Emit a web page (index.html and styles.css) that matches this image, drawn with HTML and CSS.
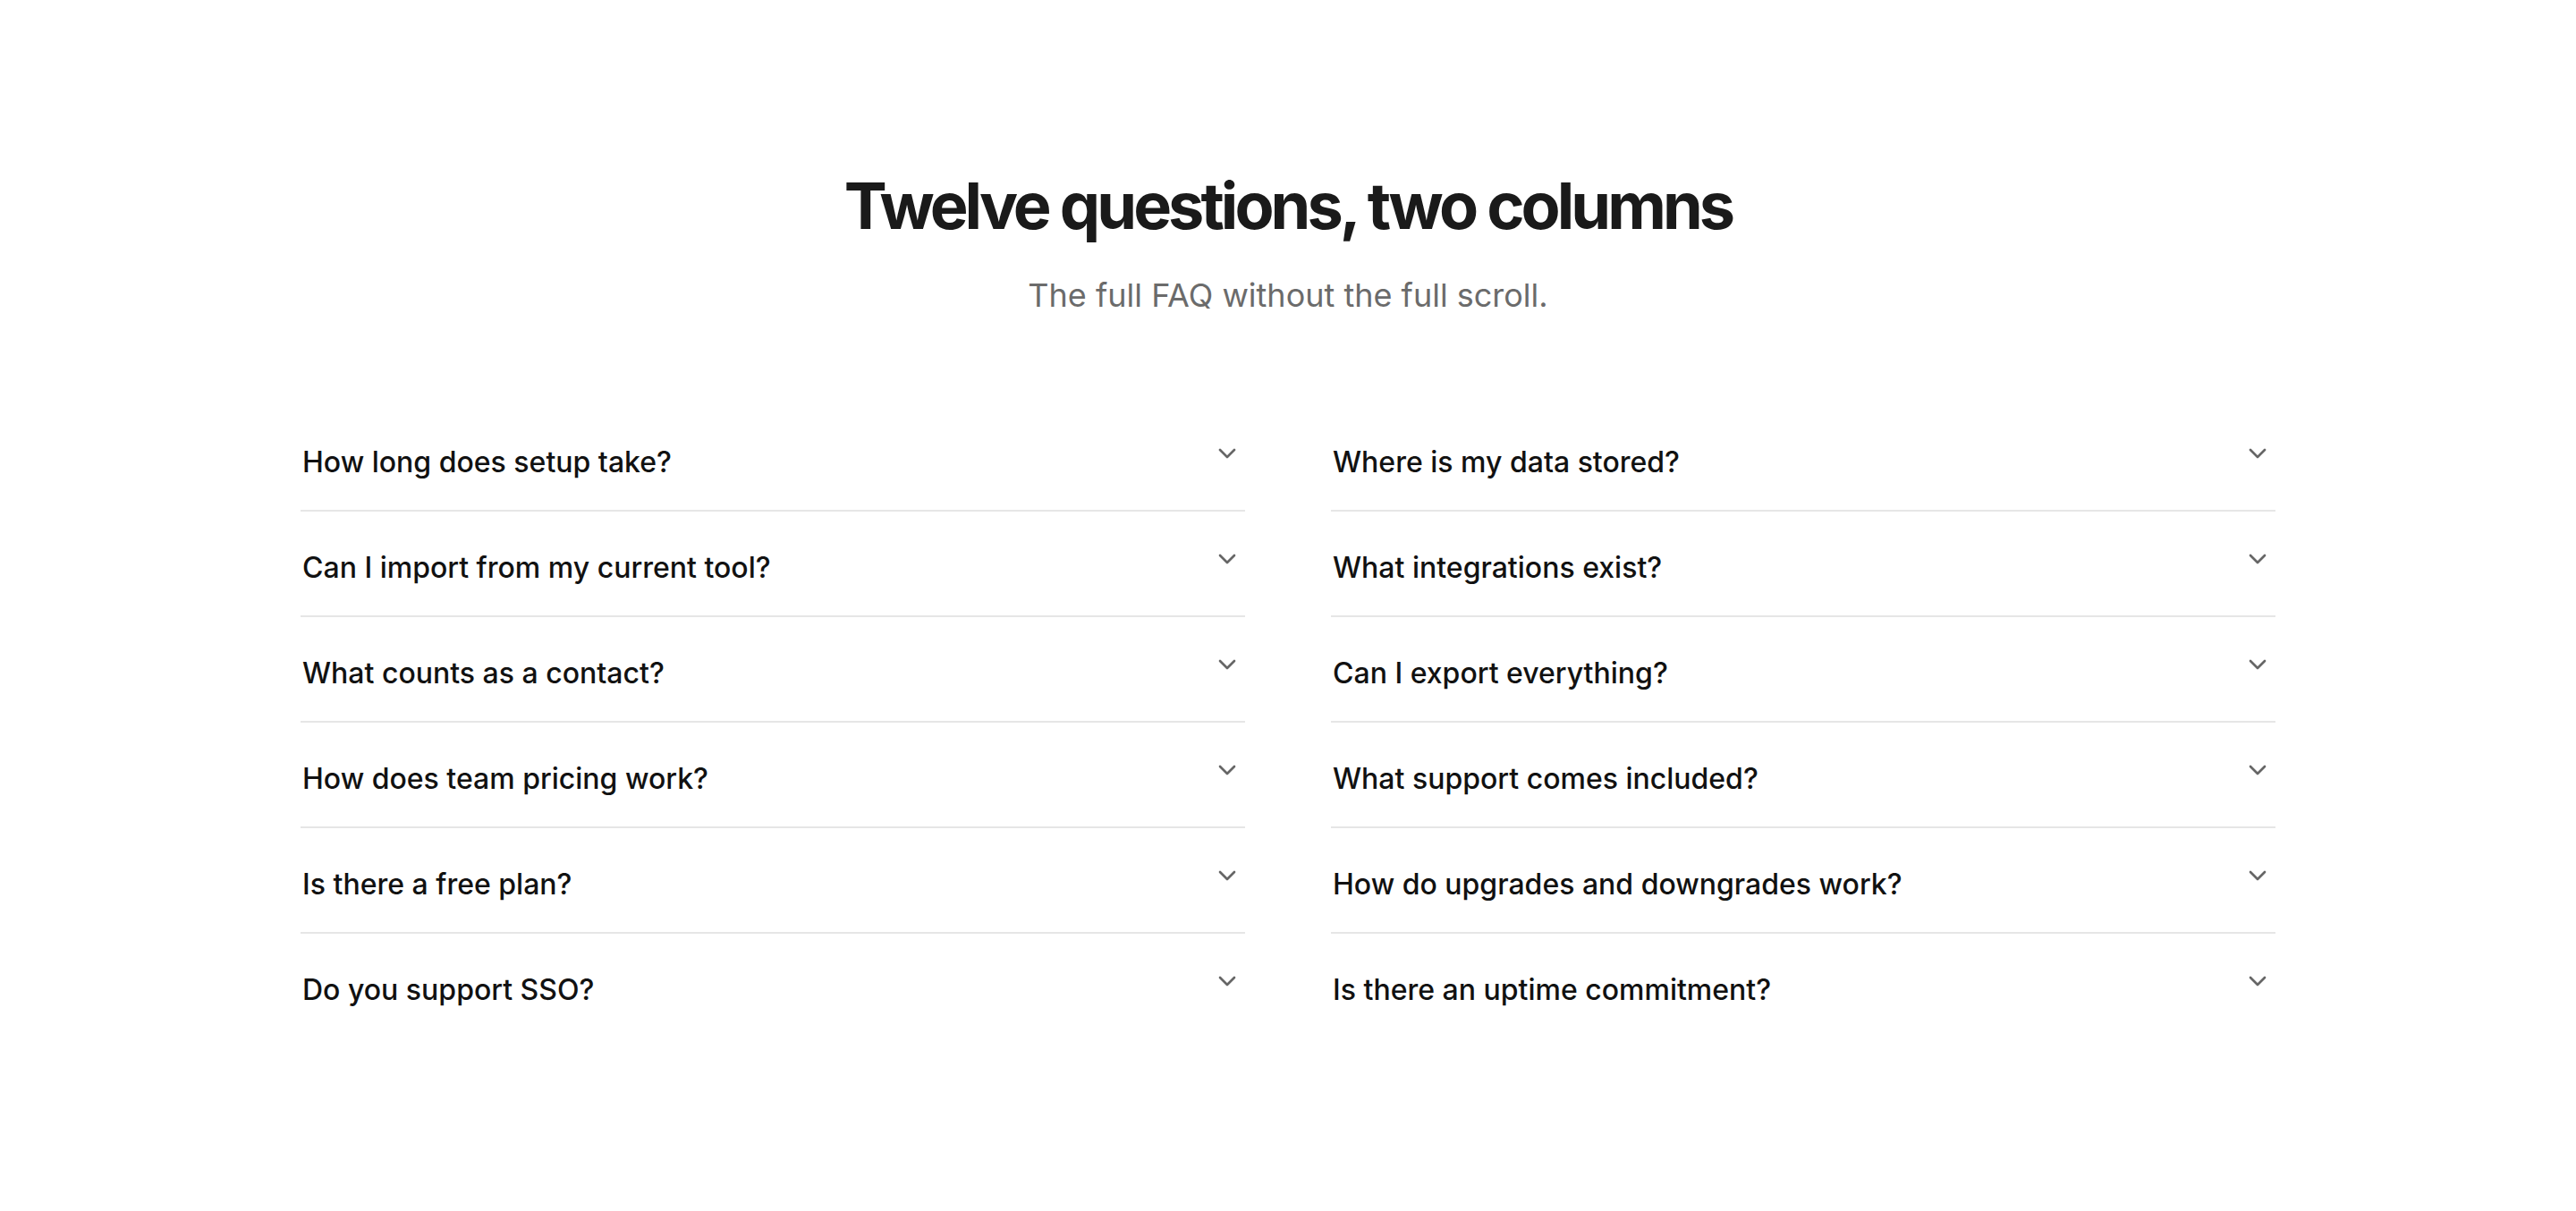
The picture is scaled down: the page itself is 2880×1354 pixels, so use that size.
FILE: index.html
```html
<!DOCTYPE html>
<html>
<head>
  <title>FAQ</title>
  <link rel="stylesheet" href="styles.css">
</head>
<body>
  <section class="faq">
    <header class="faq-header">
      <h1>Twelve questions, two columns</h1>
      <p>The full FAQ without the full scroll.</p>
    </header>

    <div class="faq-grid">
      <div class="faq-column">
        <div class="faq-item">
          <span class="faq-question">How long does setup take?</span>
          <svg class="chevron" viewBox="0 0 24 24"><path d="m6 9 6 6 6-6"/></svg>
        </div>
        <div class="faq-item">
          <span class="faq-question">Can I import from my current tool?</span>
          <svg class="chevron" viewBox="0 0 24 24"><path d="m6 9 6 6 6-6"/></svg>
        </div>
        <div class="faq-item">
          <span class="faq-question">What counts as a contact?</span>
          <svg class="chevron" viewBox="0 0 24 24"><path d="m6 9 6 6 6-6"/></svg>
        </div>
        <div class="faq-item">
          <span class="faq-question">How does team pricing work?</span>
          <svg class="chevron" viewBox="0 0 24 24"><path d="m6 9 6 6 6-6"/></svg>
        </div>
        <div class="faq-item">
          <span class="faq-question">Is there a free plan?</span>
          <svg class="chevron" viewBox="0 0 24 24"><path d="m6 9 6 6 6-6"/></svg>
        </div>
        <div class="faq-item">
          <span class="faq-question">Do you support SSO?</span>
          <svg class="chevron" viewBox="0 0 24 24"><path d="m6 9 6 6 6-6"/></svg>
        </div>
      </div>

      <div class="faq-column">
        <div class="faq-item">
          <span class="faq-question">Where is my data stored?</span>
          <svg class="chevron" viewBox="0 0 24 24"><path d="m6 9 6 6 6-6"/></svg>
        </div>
        <div class="faq-item">
          <span class="faq-question">What integrations exist?</span>
          <svg class="chevron" viewBox="0 0 24 24"><path d="m6 9 6 6 6-6"/></svg>
        </div>
        <div class="faq-item">
          <span class="faq-question">Can I export everything?</span>
          <svg class="chevron" viewBox="0 0 24 24"><path d="m6 9 6 6 6-6"/></svg>
        </div>
        <div class="faq-item">
          <span class="faq-question">What support comes included?</span>
          <svg class="chevron" viewBox="0 0 24 24"><path d="m6 9 6 6 6-6"/></svg>
        </div>
        <div class="faq-item">
          <span class="faq-question">How do upgrades and downgrades work?</span>
          <svg class="chevron" viewBox="0 0 24 24"><path d="m6 9 6 6 6-6"/></svg>
        </div>
        <div class="faq-item">
          <span class="faq-question">Is there an uptime commitment?</span>
          <svg class="chevron" viewBox="0 0 24 24"><path d="m6 9 6 6 6-6"/></svg>
        </div>
      </div>
    </div>
  </section>
</body>
</html>
```

FILE: styles.css
```css
body {
  font-family: Inter, "Noto Sans", sans-serif;
  background-color: #fff;
  color: #111;
  margin: 0;
  padding: 0;
}

.faq {
  max-width: 2208px;
  margin: 0 auto;
  padding: 190px 0 120px;
}

.faq-header {
  text-align: center;
  margin-bottom: 97px;
}

.faq-header h1 {
  margin: 0;
  font-size: 72px;
  line-height: 1.1;
  font-weight: 700;
  letter-spacing: -0.055em;
  color: #1a1a1a;
}

.faq-header p {
  margin: 34px 0 0;
  font-size: 36px;
  line-height: 1.5;
  color: #6b6b6b;
}

.faq-grid {
  display: grid;
  grid-template-columns: 1fr 1fr;
  gap: 96px;
}

.faq-item {
  display: flex;
  align-items: flex-start;
  justify-content: space-between;
  gap: 24px;
  padding: 39px 2px 29px;
  border-bottom: 2px solid #e6e6e6;
}

.faq-item:last-child {
  border-bottom: none;
}

.faq-question {
  font-size: 32px;
  line-height: 48px;
  font-weight: 500;
  color: #111;
}

.chevron {
  flex-shrink: 0;
  width: 32px;
  height: 32px;
  margin-top: -2px;
  margin-right: 2px;
  fill: none;
  stroke: #666;
  stroke-width: 2;
  stroke-linecap: round;
  stroke-linejoin: round;
}
```
